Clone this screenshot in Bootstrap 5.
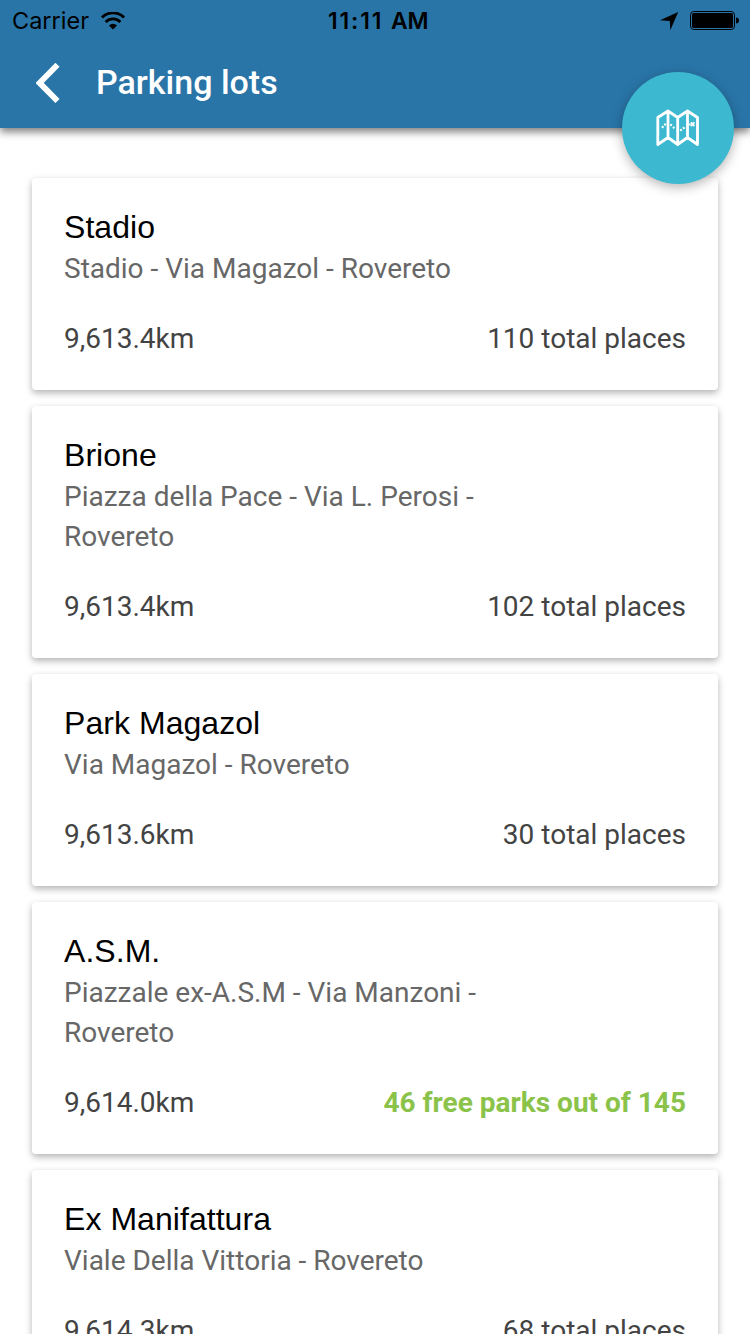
<!DOCTYPE html>
<html lang="en">
<head>
<meta charset="utf-8">
<meta name="viewport" content="width=device-width, initial-scale=1">
<title>Parking lots</title>
<link href="https://cdn.jsdelivr.net/npm/bootstrap@5.3.0/dist/css/bootstrap.min.css" rel="stylesheet">
<style>
  body { font-family: Roboto, "Liberation Sans", sans-serif; background: #fff; }
  .screen { width: 750px; height: 1334px; }
  .app-header { height: 128px; background: #2975a8; box-shadow: 0 4px 8px rgba(0,0,0,.5); z-index: 2; }
  .status-bar { height: 40px; font: 24px/40px Inter, sans-serif; color: #000; padding: 1px 10px 0 12px; }
  .carrier { letter-spacing: 0; font-size: 23.5px; width: 89px; }
  .clock { font-weight: 600; font-size: 22.8px; left: 328px; top: 1px; }
  .clock-digits { letter-spacing: 1.9px; }
  .title-bar { height: 88px; padding: 0 0 4px 36px; }
  .title-bar svg { margin-top: 2px; }
  .screen-title { font-size: 34px; line-height: 40px; font-weight: 500; margin: -1px 0 0 36px; color: #fff; }
  .map-button { width: 112px; height: 112px; left: 622px; top: 72px; background: #3cb8d0; box-shadow: 0 3px 12px rgba(0,0,0,.3); z-index: 3; border: 0; }
  .lots { padding: 50px 32px 0; gap: 16px; }
  .lot { border: 0; border-radius: 4px; box-shadow: 0 3px 7px rgba(0,0,0,.3); padding: 30px 32px 31px; flex: none; background: #fff; color: #434343; font-size: 28px; line-height: 40px; }
  .lot h2 { font: 32px/39px "Liberation Sans", sans-serif; color: #000; margin: 0 0 2px; letter-spacing: .05px; }
  .address { color: #676767; width: 430px; margin: 0 0 30px; }
  .free { color: #8bc34a; }
</style>
</head>
<body>
<div class="screen position-relative overflow-hidden">
  <header class="app-header position-relative">
    <div class="status-bar d-flex align-items-center">
      <span class="carrier">Carrier</span>
      <svg width="24" height="18" viewBox="0 0 24 18" aria-hidden="true">
        <path d="M1 5.4A15.6 15.6 0 0 1 23 5.4" fill="none" stroke="#000" stroke-width="2.9"/>
        <path d="M4.6 10A10.5 10.5 0 0 1 19.4 10" fill="none" stroke="#000" stroke-width="2.8"/>
        <path d="M7.9 13.4Q12 10 16.1 13.4L12 17.5Z"/>
      </svg>
      <span class="clock position-absolute"><span class="clock-digits">11:11 </span>AM</span>
      <svg class="ms-auto" width="20" height="20" viewBox="0 0 20 20" aria-hidden="true"><path d="M18.2 1L10.3 19.3L9.8 10L0 9.2Z"/></svg>
      <svg class="ms-2" width="52" height="22" viewBox="0 0 52 22" aria-hidden="true">
        <rect x="2.5" y="1.5" width="44" height="18" rx="3.4" fill="none" stroke="#000"/>
        <rect x="4" y="3" width="41" height="15" rx="1.8"/>
        <path d="M48 7.5Q51 7.5 51 10.5Q51 13.5 48 13.5Z"/>
      </svg>
    </div>
    <div class="title-bar d-flex align-items-center">
      <svg width="24" height="40" viewBox="0 0 24 40" aria-label="Back"><path d="M21.5 1.8L3.6 19.9L21.5 38" fill="none" stroke="#fff" stroke-width="5.8"/></svg>
      <h1 class="screen-title">Parking lots</h1>
    </div>
  </header>
  <button class="map-button btn rounded-circle position-absolute p-0 d-flex align-items-center justify-content-center" aria-label="Map">
    <svg width="44" height="38" viewBox="0 0 44 38" fill="none" stroke="#fff" stroke-width="2.8" stroke-linejoin="round">
      <path d="M1.8 8.5L12 2L21.7 8.5L31.5 2L41.5 8.5V35.5L31.5 28.5L21.7 35.5L12 28.5L1.8 35.5ZM12 2V28.5M21.7 8.5V35.5M31.5 2V28.5"/>
      <path d="M6.2 18.8L7.2 17.2M8.3 16L9.8 15M14.4 15.4L15.8 16.6M17 18L18.4 19.2M24.2 21.4L25.8 20.6M27 19.6L28.5 18.3M33 16L34.2 15" stroke-width="2.2"/>
      <path d="M34.8 13.4L38.4 17M38.4 13.4L34.8 17" stroke-width="1.8"/>
    </svg>
  </button>
  <main class="lots d-flex flex-column">
    <article class="lot card"><h2>Stadio</h2><p class="address">Stadio - Via Magazol - Rovereto</p>
      <div class="d-flex justify-content-between"><span>9,613.4km</span><span>110 total places</span></div></article>
    <article class="lot card"><h2>Brione</h2><p class="address">Piazza della Pace - Via L. Perosi - Rovereto</p>
      <div class="d-flex justify-content-between"><span>9,613.4km</span><span>102 total places</span></div></article>
    <article class="lot card"><h2>Park Magazol</h2><p class="address">Via Magazol - Rovereto</p>
      <div class="d-flex justify-content-between"><span>9,613.6km</span><span>30 total places</span></div></article>
    <article class="lot card"><h2>A.S.M.</h2><p class="address">Piazzale ex-A.S.M - Via Manzoni - Rovereto</p>
      <div class="d-flex justify-content-between"><span>9,614.0km</span><span class="free fw-bold">46 free parks out of 145</span></div></article>
    <article class="lot card"><h2>Ex Manifattura</h2><p class="address">Viale Della Vittoria - Rovereto</p>
      <div class="d-flex justify-content-between"><span>9,614.3km</span><span>68 total places</span></div></article>
  </main>
</div>
<script src="https://cdn.jsdelivr.net/npm/bootstrap@5.3.0/dist/js/bootstrap.bundle.min.js"></script>
</body>
</html>
